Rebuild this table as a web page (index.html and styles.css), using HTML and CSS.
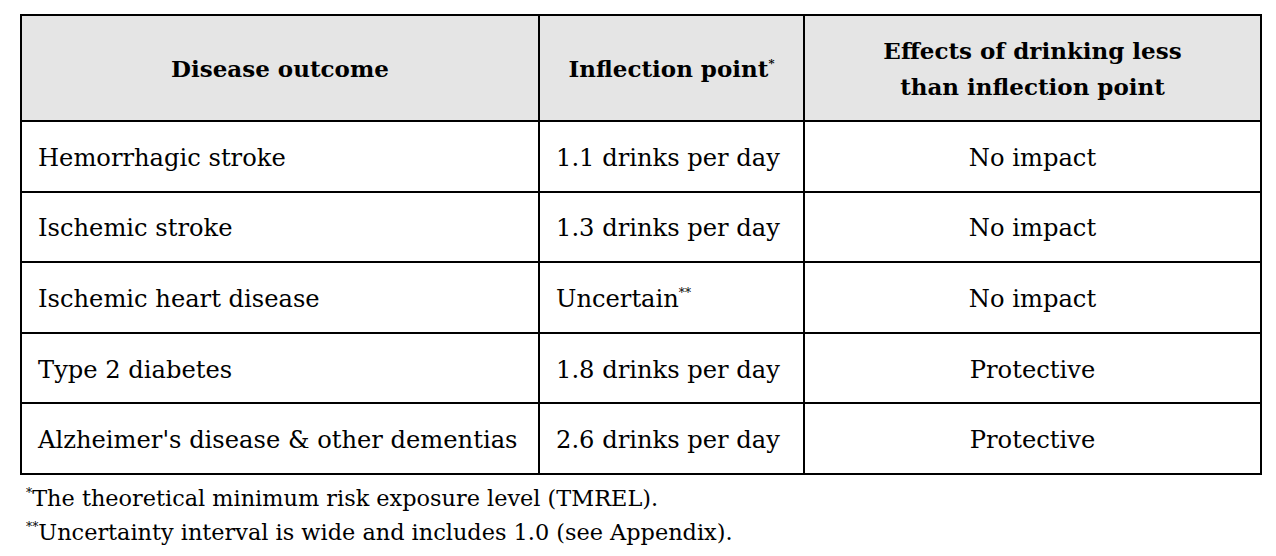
FILE: index.html
```html
<!DOCTYPE html>
<html lang="en">
<head>
<meta charset="utf-8">
<title>Inflection points</title>
<link rel="stylesheet" href="styles.css">
</head>
<body>
<div class="page">
  <table class="risk">
    <colgroup>
      <col class="c1">
      <col class="c2">
      <col class="c3">
    </colgroup>
    <thead>
      <tr>
        <th class="center">Disease outcome</th>
        <th class="center">Inflection point<sup>*</sup></th>
        <th class="center">Effects of drinking less<br>than inflection point</th>
      </tr>
    </thead>
    <tbody>
      <tr><td>Hemorrhagic stroke</td><td>1.1 drinks per day</td><td class="center">No impact</td></tr>
      <tr><td>Ischemic stroke</td><td>1.3 drinks per day</td><td class="center">No impact</td></tr>
      <tr><td>Ischemic heart disease</td><td>Uncertain<sup>**</sup></td><td class="center">No impact</td></tr>
      <tr><td>Type 2 diabetes</td><td>1.8 drinks per day</td><td class="center">Protective</td></tr>
      <tr><td>Alzheimer's disease &amp; other dementias</td><td>2.6 drinks per day</td><td class="center">Protective</td></tr>
    </tbody>
  </table>
  <div class="notes">
    <p><sup>*</sup>The theoretical minimum risk exposure level (TMREL).</p>
    <p><sup>**</sup>Uncertainty interval is wide and includes 1.0 (see Appendix).</p>
  </div>
</div>
</body>
</html>
```

FILE: styles.css
```css
html, body {
  margin: 0;
  padding: 0;
  background: #ffffff;
}

body {
  font-family: "DejaVu Serif", serif;
  color: #000;
}

.page {
  padding: 14px 0 0 20px;
}

.risk {
  width: 1240px;
  border-collapse: collapse;
  table-layout: fixed;
  font-size: 24.2px;
}

.c1 { width: 518px; }
.c2 { width: 265px; }
.c3 { width: 457px; }

.risk th,
.risk td {
  border: 2px solid #000;
  padding: 0 16px;
  vertical-align: middle;
  line-height: 36px;
}

.risk th {
  background: #e5e5e5;
  height: 102px;
  font-weight: bold;
  font-size: 23px;
  padding-top: 2px;
}

.risk td {
  height: 65.6px;
  text-align: left;
  white-space: nowrap;
  padding-top: 3px;
}

.risk .center {
  text-align: center;
}

sup {
  font-size: 0.5em;
  line-height: 0;
  vertical-align: 0.85em;
}

.notes {
  padding: 6px 0 0 6px;
  font-size: 22.4px;
}

.notes p {
  margin: 0;
  line-height: 34px;
}

.notes sup {
  font-size: 0.55em;
  vertical-align: 0.75em;
}
```
